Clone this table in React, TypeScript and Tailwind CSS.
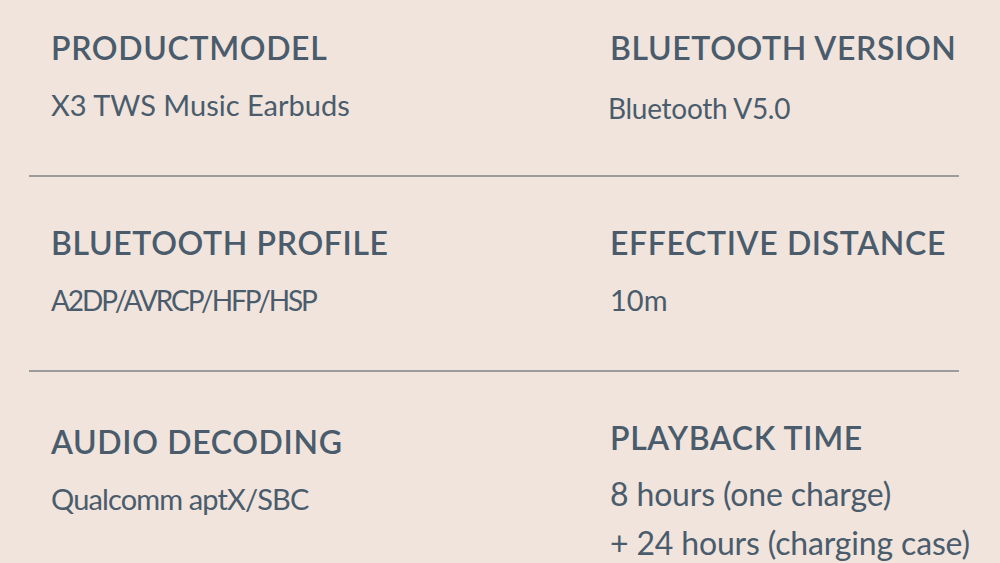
import React from "react";

type Spec = { title: string; lines: string[]; shift?: string; body?: string; mt?: string; gap?: string };

const rows: { left: Spec; right: Spec; pt: string }[] = [
  {
    left: { title: "PRODUCTMODEL", lines: ["X3 TWS Music Earbuds"] },
    right: {
      title: "BLUETOOTH VERSION",
      lines: ["Bluetooth V5.0"],
      body: "text-[28px] leading-[40px] -ml-[2px] tracking-[-0.01em]",
      mt: "mt-[20px]",
    },
    pt: "pt-[28px] h-[175px]",
  },
  {
    left: {
      title: "BLUETOOTH PROFILE",
      lines: ["A2DP/AVRCP/HFP/HSP"],
      body: "text-[28px] leading-[40px] tracking-[-0.075em]",
    },
    right: { title: "EFFECTIVE DISTANCE", lines: ["10m"] },
    pt: "pt-[46px] h-[193px]",
  },
  {
    left: {
      title: "AUDIO DECODING",
      lines: ["Qualcomm aptX/SBC"],
      body: "text-[29px] leading-[40px] tracking-[-0.03em]",
    },
    right: {
      title: "PLAYBACK TIME",
      lines: ["8 hours (one charge)", "+ 24 hours (charging case)"],
      shift: "-mt-[4px]",
      body: "text-[32px] leading-[40px] tracking-[-0.005em]",
      mt: "mt-[16px]",
      gap: "gap-[9px]",
    },
    pt: "pt-[50px]",
  },
];

function Cell({ spec }: { spec: Spec }) {
  const body = spec.body ?? "text-[29px] leading-[40px]";
  return (
    <div className={`flex flex-col whitespace-nowrap ${spec.shift ?? ""}`}>
      <div className="text-[32px] leading-[40px] font-semibold tracking-[0.02em] text-[#4a5c6c]">
        {spec.title}
      </div>
      <div className={`flex flex-col ${spec.mt ?? "mt-[17px]"} ${spec.gap ?? "gap-[7px]"}`}>
        {spec.lines.map((l) => (
          <div key={l} className={`${body} text-[#4a5c6c]`}>
            {l}
          </div>
        ))}
      </div>
    </div>
  );
}

export default function App() {
  return (
    <div
      className="w-[1000px] h-[563px] overflow-hidden bg-[#f0e4dc] px-[29px]"
      style={{ fontFamily: "Lato, 'Open Sans', sans-serif" }}
    >
      {rows.map((r, i) => (
        <div key={i} className="flex flex-col">
          <div className={`grid grid-cols-[559px_1fr] pl-[22px] ${r.pt}`}>
            <Cell spec={r.left} />
            <Cell spec={r.right} />
          </div>
          {i < 2 && <div className="h-[2px] w-[930px] bg-[#9c9c9c]" />}
        </div>
      ))}
    </div>
  );
}
